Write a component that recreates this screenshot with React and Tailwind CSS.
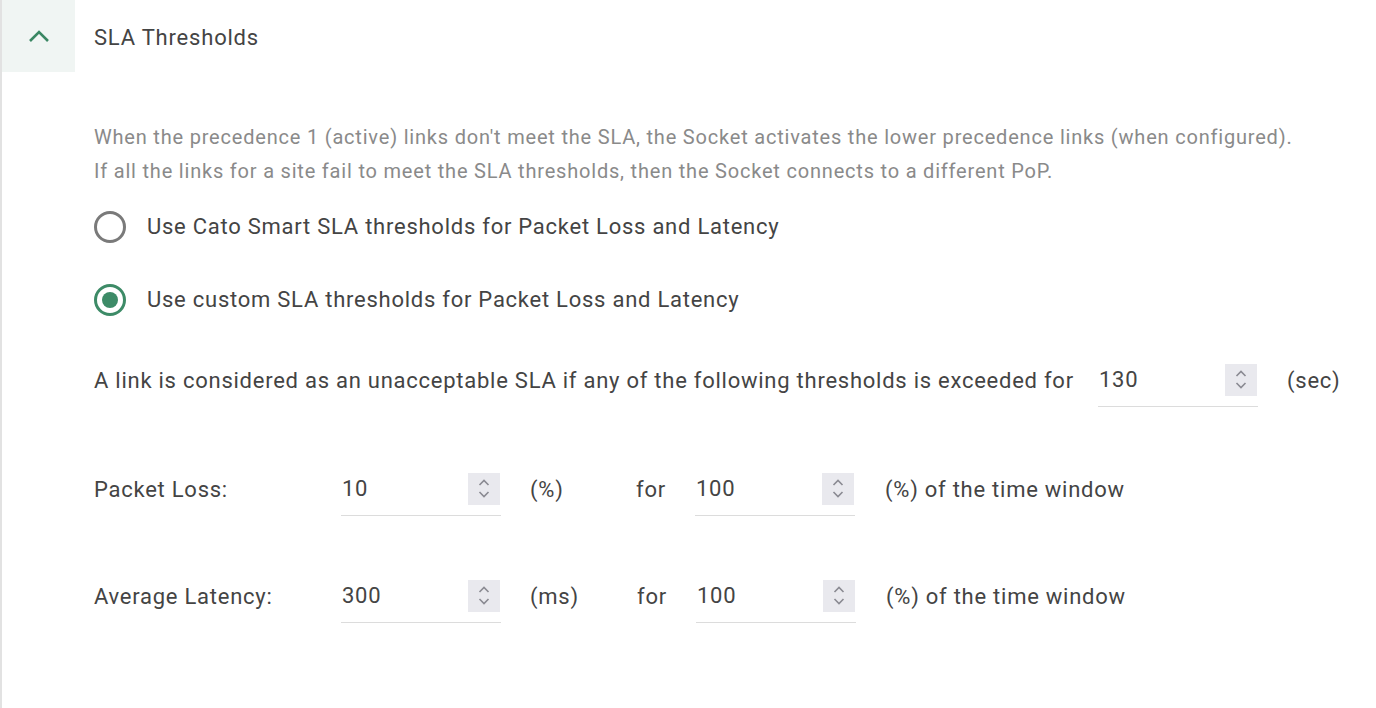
import { useState } from 'react';

const ChevronUp = () => (
  <svg width="22" height="14" viewBox="0 0 22 14" fill="none">
    <path d="M2 12L11 3l9 9" stroke="#3a8763" strokeWidth="2.6" />
  </svg>
);

const Spinner = () => (
  <div className="w-8 h-8 bg-[#e9e9ee] flex flex-col items-center justify-center gap-[5px]">
    <svg width="12" height="7" viewBox="0 0 12 7" fill="none">
      <path d="M1.5 6L6 1.5 10.5 6" stroke="#8a8a92" strokeWidth="1.6" />
    </svg>
    <svg width="12" height="7" viewBox="0 0 12 7" fill="none">
      <path d="M1.5 1L6 5.5 10.5 1" stroke="#8a8a92" strokeWidth="1.6" />
    </svg>
  </div>
);

// value + stepper, thin underline like the reference
const NumberField = ({ value }) => (
  <div className="w-[160px] py-[10px] border-b border-[#dcdcdc] flex items-center justify-between pl-[1px] pr-[1px]">
    <span className="text-[22px] tracking-[0.75px] text-[#444]">{value}</span>
    <Spinner />
  </div>
);

const Radio = ({ checked, label, onClick }) => (
  <button type="button" onClick={onClick} className="flex items-center gap-[21px] text-left">
    <span
      className={
        checked
          ? 'w-8 h-8 rounded-full border-[3px] border-[#3d8b67] flex items-center justify-center'
          : 'w-8 h-8 rounded-full border-[3px] border-[#7a7a7a] flex items-center justify-center'
      }
    >
      {checked && <span className="w-4 h-4 rounded-full bg-[#3d8b67]" />}
    </span>
    <span className="text-[22px] tracking-[0.75px] text-[#444]">{label}</span>
  </button>
);

export default function App() {
  const [mode, setMode] = useState('custom');

  return (
    <div className="w-[1376px] h-[708px] bg-white border-l-2 border-[#e2e2e2] overflow-hidden" style={{ fontFamily: 'Roboto, "Liberation Sans", sans-serif' }}>
      {/* header */}
      <div className="flex items-center h-[72px]">
        <div className="w-[73px] h-[72px] bg-[#f0f5f3] flex items-center justify-center">
          <ChevronUp />
        </div>
        <div className="pl-[19px] pt-[2px] text-[22px] tracking-[0.8px] text-[#444]">SLA Thresholds</div>
      </div>

      <div className="pl-[92px] pt-[48px]">
        <p className="text-[20px] tracking-[0.8px] leading-[34px] text-[#8a8a8a]">
          When the precedence 1 (active) links don't meet the SLA, the Socket activates the lower precedence links (when configured).
          <br />
          If all the links for a site fail to meet the SLA thresholds, then the Socket connects to a different PoP.
        </p>

        <div className="flex flex-col gap-[40px] mt-[22px]">
          <Radio checked={mode === 'smart'} onClick={() => setMode('smart')} label="Use Cato Smart SLA thresholds for Packet Loss and Latency" />
          <Radio checked={mode === 'custom'} onClick={() => setMode('custom')} label="Use custom SLA thresholds for Packet Loss and Latency" />
        </div>

        <div className="flex items-center mt-[37px] text-[22px] tracking-[0.75px] text-[#444]">
          <span className="w-[1004px] whitespace-nowrap">A link is considered as an unacceptable SLA if any of the following thresholds is exceeded for</span>
          <NumberField value="130" />
          <span className="ml-[29px]">(sec)</span>
        </div>

        <div className="flex items-center mt-[55px] text-[22px] tracking-[0.75px] text-[#444]">
          <span className="w-[247px]">Packet Loss:</span>
          <NumberField value="10" />
          <span className="ml-[29px] w-[106px]">(%)</span>
          <span className="w-[59px]">for</span>
          <NumberField value="100" />
          <span className="ml-[30px]">(%) of the time window</span>
        </div>

        <div className="flex items-center mt-[53px] text-[22px] tracking-[0.75px] text-[#444]">
          <span className="w-[247px]">Average Latency:</span>
          <NumberField value="300" />
          <span className="ml-[29px] w-[107px]">(ms)</span>
          <span className="w-[59px]">for</span>
          <NumberField value="100" />
          <span className="ml-[30px]">(%) of the time window</span>
        </div>
      </div>
    </div>
  );
}
